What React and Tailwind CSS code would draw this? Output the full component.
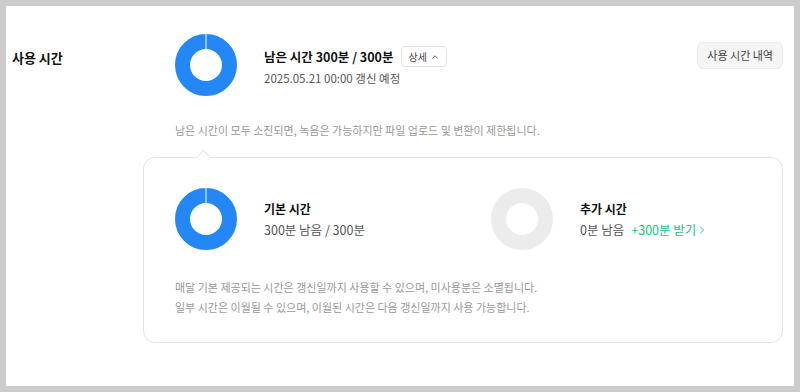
import { ChevronUp, ChevronRight } from "lucide-react";

const FONT = { fontFamily: '"Noto Sans CJK KR", "Noto Sans", sans-serif' };

function Donut({ color, gap }) {
  return (
    <svg width="62" height="62" viewBox="0 0 62 62" className="shrink-0">
      <circle cx="31" cy="31" r="23.5" fill="none" stroke={color} strokeWidth="15" />
      {gap && <line x1="31" y1="0" x2="31" y2="16" stroke="#ffffff" strokeWidth="1" />}
    </svg>
  );
}

export default function App() {
  return (
    <div className="w-[800px] h-[392px] bg-[#cccccc] p-[6px]" style={FONT}>
      <div className="h-full bg-white flex pl-[6px] pr-[11px]">
        <div className="w-[131px] shrink-0 pt-[42px] text-[13px] font-bold text-[#111] leading-[20px]">
          사용 시간
        </div>

        <div className="flex-1 flex flex-col">
          <div className="flex items-start pt-[28px] pl-[32px]">
            <Donut color="#2388f5" gap />
            <div className="ml-[27px] mt-[12px] flex flex-col">
              <div className="flex items-center">
                <span className="text-[12.5px] font-bold text-[#111] leading-[20px]">남은 시간 300분 / 300분</span>
                <button className="ml-[8px] h-[21px] px-[6px] flex items-center gap-[3px] border border-[#e2e2e2] rounded-[4px] text-[10px] text-[#444]">
                  상세
                  <ChevronUp size={10} strokeWidth={2} />
                </button>
              </div>
              <span className="mt-[2px] text-[11.5px] text-[#555] leading-[18px]">2025.05.21 00:00 갱신 예정</span>
            </div>
            <button className="ml-auto mt-[8px] h-[27px] px-[9px] bg-[#f5f5f5] border border-[#ececec] rounded-[6px] text-[11px] text-[#444]">
              사용 시간 내역
            </button>
          </div>

          <p className="mt-[25px] pl-[32px] text-[11px] text-[#999] leading-[18px]">
            남은 시간이 모두 소진되면, 녹음은 가능하지만 파일 업로드 및 변환이 제한됩니다.
          </p>

          <div className="relative mt-[18px] h-[186px] border border-[#e3e3e3] rounded-[12px] pl-[31px] pt-[30px]">
            <div className="absolute -top-[6px] left-[54px] w-[11px] h-[11px] bg-white border-l border-t border-[#e3e3e3] rotate-45" />
            <div className="flex items-center">
              <div className="w-[316px] flex items-center">
                <Donut color="#2388f5" gap />
                <div className="ml-[27px] flex flex-col">
                  <span className="text-[12px] font-bold text-[#111] leading-[20px]">기본 시간</span>
                  <span className="mt-[1px] text-[12.5px] text-[#555] leading-[20px]">300분 남음 / 300분</span>
                </div>
              </div>
              <div className="flex items-center">
                <Donut color="#ececec" />
                <div className="ml-[27px] flex flex-col">
                  <span className="text-[12px] font-bold text-[#111] leading-[20px]">추가 시간</span>
                  <div className="mt-[1px] flex items-center text-[12.5px] leading-[20px]">
                    <span className="text-[#555]">0분 남음</span>
                    <span className="ml-[7px] text-[#16c47a]">+300분 받기</span>
                    <ChevronRight size={12} strokeWidth={2} className="text-[#16c47a]" />
                  </div>
                </div>
              </div>
            </div>
            <div className="mt-[27px] text-[11px] text-[#999] leading-[20px]">
              <p>매달 기본 제공되는 시간은 갱신일까지 사용할 수 있으며, 미사용분은 소멸됩니다.</p>
              <p>일부 시간은 이월될 수 있으며, 이월된 시간은 다음 갱신일까지 사용 가능합니다.</p>
            </div>
          </div>
        </div>
      </div>
    </div>
  );
}
